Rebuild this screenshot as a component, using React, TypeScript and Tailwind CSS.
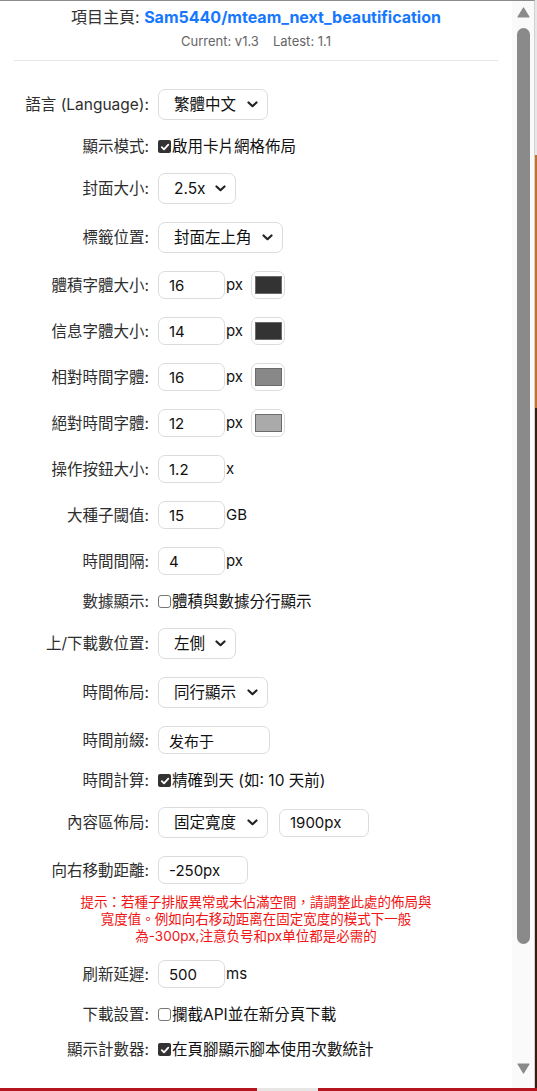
import * as React from 'react';

const FONT = 'font-["Inter","Noto_Sans_CJK_TC",sans-serif]';

const Chevron = () => (
  <svg width="11" height="7" viewBox="0 0 11 7" fill="none" className="shrink-0">
    <path d="M1.5 1.5 L5.5 5.2 L9.5 1.5" stroke="#222" strokeWidth="2.2" strokeLinecap="round" strokeLinejoin="round" />
  </svg>
);

const Row: React.FC<{ label: string; children: React.ReactNode }> = ({ label, children }) => (
  <div className="flex items-center">
    <div className="w-[136px] shrink-0 text-right text-[15.5px] leading-[17px] text-[#2e2e2e] pr-[1px] whitespace-nowrap">{label}</div>
    <div className="ml-[8px] flex items-center">{children}</div>
  </div>
);

const Select: React.FC<{ value: string; w: string }> = ({ value, w }) => (
  <div className={`${w} h-[31px] flex items-center justify-between pl-[15px] pr-[9px] border border-[#dcdcdc] rounded-[7px] bg-white text-[15.5px] text-[#111]`}>
    <span>{value}</span>
    <Chevron />
  </div>
);

const Input: React.FC<{ value: string; w: string }> = ({ value, w }) => (
  <input
    readOnly
    value={value}
    className={`${w} h-[28px] px-[10px] border border-[#dcdcdc] rounded-[7px] bg-white text-[15px] text-[#111] outline-none ${FONT}`}
  />
);

const Unit: React.FC<{ text: string }> = ({ text }) => (
  <span className="ml-[1px] text-[15px] text-[#111]">{text}</span>
);

const Swatch: React.FC<{ color: string }> = ({ color }) => (
  <div className="ml-[8px] w-[34px] h-[28px] flex items-center justify-center border border-[#dcdcdc] rounded-[7px] bg-white">
    <div className="w-[27px] h-[18px] border border-[#6b6b6b]" style={{ backgroundColor: color }} />
  </div>
);

const Check: React.FC<{ checked?: boolean; text: string }> = ({ checked, text }) => (
  <div className="flex items-center h-[17px]">
    {checked ? (
      <div className="w-[13px] h-[13px] rounded-[2px] bg-[#333] flex items-center justify-center">
        <svg width="10" height="10" viewBox="0 0 10 10" fill="none">
          <path d="M1.8 5.2 L4 7.4 L8.3 2.6" stroke="#fff" strokeWidth="1.8" strokeLinecap="round" strokeLinejoin="round" />
        </svg>
      </div>
    ) : (
      <div className="w-[13px] h-[13px] rounded-[3px] border border-[#767676] bg-white" />
    )}
    <span className="ml-[1px] text-[15.5px] text-[#111] whitespace-nowrap">{text}</span>
  </div>
);

const Triangle: React.FC<{ up?: boolean }> = ({ up }) => (
  <svg width="13" height="11" viewBox="0 0 13 11">
    <path d={up ? 'M6.5 1 L12 10 L1 10 Z' : 'M1 1 L12 1 L6.5 10 Z'} fill="#8a8a8a" strokeLinejoin="round" stroke="#8a8a8a" strokeWidth="1.2" />
  </svg>
);

export default function App() {
  return (
    <div className={`w-[537px] h-[1091px] flex flex-col bg-[#b5151f] ${FONT}`}>
      <div className="flex h-[1088px]">
        <div className="w-[535px] flex bg-white border-t border-[#8c8c8c] border-r border-r-[#d0d0d0] overflow-hidden">
          {/* settings */}
          <div className="w-[512px] px-[14px] pt-[5px]">
            <div className="text-center text-[16px] leading-[22px] text-[#333]">
              項目主頁: <span className="font-bold text-[#1677ff]">Sam5440/mteam_next_beautification</span>
            </div>
            <div className="mt-[4px] text-center text-[13px] leading-[18px] text-[#666]">
              Current: v1.3<span className="inline-block w-[14px]" />Latest: 1.1
            </div>
            <div className="mt-[10px] h-px bg-[#e6e6e6]" />

            <div className="mt-[28px] flex flex-col gap-[18px]">
              <Row label="語言 (Language):"><Select value="繁體中文" w="w-[110px]" /></Row>
              <Row label="顯示模式:"><Check checked text="啟用卡片網格佈局" /></Row>
              <Row label="封面大小:"><Select value="2.5x" w="w-[78px]" /></Row>
              <Row label="標籤位置:"><Select value="封面左上角" w="w-[125px]" /></Row>
              <Row label="體積字體大小:"><Input value="16" w="w-[67px]" /><Unit text="px" /><Swatch color="#333333" /></Row>
              <Row label="信息字體大小:"><Input value="14" w="w-[67px]" /><Unit text="px" /><Swatch color="#333333" /></Row>
              <Row label="相對時間字體:"><Input value="16" w="w-[67px]" /><Unit text="px" /><Swatch color="#888888" /></Row>
              <Row label="絕對時間字體:"><Input value="12" w="w-[67px]" /><Unit text="px" /><Swatch color="#aaaaaa" /></Row>
              <Row label="操作按鈕大小:"><Input value="1.2" w="w-[67px]" /><Unit text="x" /></Row>
              <Row label="大種子閾值:"><Input value="15" w="w-[67px]" /><Unit text="GB" /></Row>
              <Row label="時間間隔:"><Input value="4" w="w-[67px]" /><Unit text="px" /></Row>
              <Row label="數據顯示:"><Check text="體積與數據分行顯示" /></Row>
              <Row label="上/下載數位置:"><Select value="左側" w="w-[78px]" /></Row>
              <Row label="時間佈局:"><Select value="同行顯示" w="w-[110px]" /></Row>
              <Row label="時間前綴:"><Input value="发布于" w="w-[112px]" /></Row>
              <Row label="時間計算:"><Check checked text="精確到天 (如: 10 天前)" /></Row>
              <Row label="內容區佈局:">
                <Select value="固定寬度" w="w-[110px]" />
                <div className="ml-[11px]"><Input value="1900px" w="w-[90px]" /></div>
              </Row>
              <Row label="向右移動距離:"><Input value="-250px" w="w-[90px]" /></Row>
              <div className="-mt-[8px] -mb-[3px] text-center text-[13.5px] leading-[17px] text-[#f01414]">
                提示：若種子排版異常或未佔滿空間，請調整此處的佈局與<br />
                寬度值。例如向右移动距离在固定宽度的模式下一般<br />
                為-300px,注意负号和px单位都是必需的
              </div>
              <Row label="刷新延遲:"><Input value="500" w="w-[67px]" /><Unit text="ms" /></Row>
              <Row label="下載設置:"><Check text="攔截API並在新分頁下載" /></Row>
              <Row label="顯示計數器:"><Check checked text="在頁腳顯示腳本使用次數統計" /></Row>
            </div>
          </div>

          {/* scrollbar */}
          <div className="w-[22px] flex flex-col items-center bg-[#fafafa] pt-[6px]">
            <Triangle up />
            <div className="mt-[10px] w-[13px] h-[916px] rounded-full bg-[#8a8a8a]" />
            <div className="mt-[119px]">
              <Triangle />
            </div>
          </div>
        </div>
        <div className="w-[2px] flex flex-col">
          <div className="h-[160px] bg-[#e8e8e8]" />
          <div className="h-[260px] bg-[#c2702a]" />
          <div className="h-[700px] bg-[#3a1a0a]" />
        </div>
      </div>
      <div className="flex-1 flex">
        <div className="w-[257px] bg-[#b5151f]" />
        <div className="w-[61px] bg-[#e8e6e4]" />
        <div className="flex-1 bg-[#b5151f]" />
      </div>
    </div>
  );
}
